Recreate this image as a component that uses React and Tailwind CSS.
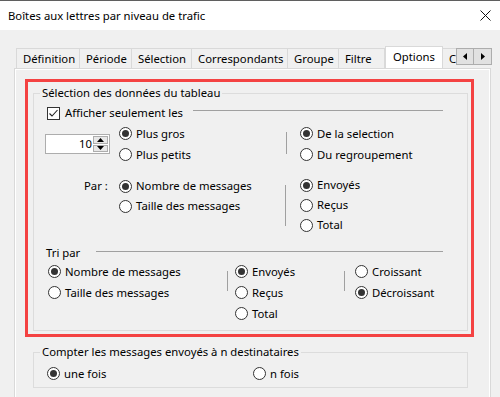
import React from "react";

const Radio = ({ checked = false, label, h = "h-[21px]" }) => (
  <div className={`flex ${h} items-center`}>
    <span className="flex h-[13px] w-[13px] shrink-0 items-center justify-center rounded-full border border-[#333333] bg-white">
      {checked && <span className="h-[7px] w-[7px] rounded-full bg-[#333333]" />}
    </span>
    <span className="ml-[4px] whitespace-nowrap">{label}</span>
  </div>
);

const Checkbox = ({ label }) => (
  <div className="flex h-[16px] items-center">
    <span className="flex h-[13px] w-[13px] shrink-0 items-center justify-center border border-[#333333] bg-white">
      <svg width="11" height="11" viewBox="0 0 11 11">
        <path d="M1.5 5.5 L4 8 L9.5 2" fill="none" stroke="#222" strokeWidth="1.1" />
      </svg>
    </span>
    <span className="ml-[5px] whitespace-nowrap">{label}</span>
  </div>
);

const VLine = ({ className = "" }) => (
  <div className={`w-px bg-[#a0a0a0] ${className}`} />
);

const GroupBox = ({ title, className = "", children }) => (
  <div className={`border border-[#dcdcdc] ${className}`}>
    <div className="-mt-[9px] ml-[6px] flex h-[16px] items-center">
      <span className="bg-[#f0f0f0] px-[2px] whitespace-nowrap">{title}</span>
    </div>
    {children}
  </div>
);

const tabs = [
  { label: "Définition", w: "w-[64px]", first: true },
  { label: "Période", w: "w-[52px]" },
  { label: "Sélection", w: "w-[60px]" },
  { label: "Correspondants", w: "w-[96px]" },
  { label: "Groupe", w: "w-[51px]" },
  { label: "Filtre", w: "w-[46px]" },
  { label: "Options", w: "w-[58px]", active: true },
  { label: "C", w: "w-[14px]" },
];

const Tabs = () => (
  <div className="ml-[2px] flex h-[23px] items-end">
    <div className="flex w-[440px] items-end overflow-hidden">
      {tabs.map((t) =>
        t.active ? (
          <div
            key={t.label}
            className={`${t.w} relative z-10 -mb-px flex h-[23px] shrink-0 items-center justify-center border-x border-t border-[#d9d9d9] bg-white pb-[2px]`}
          >
            {t.label}
          </div>
        ) : (
          <div
            key={t.label}
            className={`${t.w} flex h-[20px] shrink-0 items-center border-t border-[#d9d9d9] pl-[6px] ${
              t.first ? "border-l" : ""
            } ${t.label === "C" ? "pl-[4px]" : "border-r"}`}
          >
            {t.label}
          </div>
        )
      )}
    </div>
    <div className="mb-[3px] flex h-[17px]">
      <div className="flex w-[18px] items-center justify-center border border-[#adadad] bg-[#e1e1e1]">
        <svg width="4" height="7" viewBox="0 0 4 7">
          <path d="M4 0 L0 3.5 L4 7 Z" fill="#000" />
        </svg>
      </div>
      <div className="-ml-px flex w-[19px] items-center justify-center border border-[#adadad] bg-[#e1e1e1]">
        <svg width="4" height="7" viewBox="0 0 4 7">
          <path d="M0 0 L4 3.5 L0 7 Z" fill="#000" />
        </svg>
      </div>
    </div>
  </div>
);

const SpinBox = () => (
  <div className="flex h-[20px] w-[65px] border border-[#adadad] bg-white">
    <div className="flex flex-1 items-center justify-end pr-[1px]">10</div>
    <div className="flex w-[16px] flex-col gap-px py-[1px] pr-[1px]">
      <div className="flex flex-1 items-center justify-center border border-[#adadad] bg-[#e8e8e8]">
        <svg width="7" height="4" viewBox="0 0 7 4">
          <path d="M0 4 L3.5 0 L7 4 Z" fill="#000" />
        </svg>
      </div>
      <div className="flex flex-1 items-center justify-center border border-[#adadad] bg-[#e8e8e8]">
        <svg width="7" height="4" viewBox="0 0 7 4">
          <path d="M0 0 L3.5 4 L7 0 Z" fill="#000" />
        </svg>
      </div>
    </div>
  </div>
);

export default function App() {
  return (
    <div className="h-[397px] w-[500px] overflow-hidden border-t border-[#5f5f5f] bg-[#f0f0f0] text-[11.3px] leading-[16px] text-black font-['Segoe_UI','Noto_Sans',sans-serif]">
      {/* Title bar */}
      <div className="flex h-[29px] items-center justify-between bg-white pl-[8px] pr-[9px]">
        <span className="pt-[1px]">Boîtes aux lettres par niveau de trafic</span>
        <svg width="11" height="11" viewBox="0 0 11 11">
          <path d="M0.5 0.5 L10.5 10.5 M10.5 0.5 L0.5 10.5" stroke="#111" strokeWidth="1" />
        </svg>
      </div>

      <div className="pl-[14px] pt-[15px]">
        <Tabs />

        {/* Tab page */}
        <div className="h-[340px] w-[477px] border border-[#d9d9d9] bg-white p-px">
          <div className="h-full w-full bg-[#f0f0f0] pl-[9px] pt-[9px]">
            {/* Highlighted area */}
            <div className="h-[258px] w-[449px] border-[3px] border-[#f44242] pl-[5px] pt-[11px]">
              <GroupBox title="Sélection des données du tableau" className="h-[238px] w-[435px]">
                {/* Afficher seulement les */}
                <div className="mt-[4px] flex items-start">
                  <div className="ml-[13px] w-[146px]">
                    <Checkbox label="Afficher seulement les" />
                  </div>
                  <div className="mt-[5px] h-px w-[250px] bg-[#a0a0a0]" />
                </div>

                {/* Spin + taille */}
                <div className="mt-[2px] flex">
                  <div className="w-[85px] pl-[11px] pt-[11px]">
                    <SpinBox />
                  </div>
                  <div className="w-[167px]">
                    <Radio checked label="Plus gros" />
                    <Radio label="Plus petits" />
                  </div>
                  <VLine className="mt-[9px] h-[22px]" />
                  <div className="ml-[13px]">
                    <Radio checked label="De la selection" />
                    <Radio label="Du regroupement" />
                  </div>
                </div>

                {/* Par */}
                <div className="mt-[10px] flex">
                  <div className="w-[85px] pl-[50px] pt-[3px]">Par :</div>
                  <div className="w-[166px] pt-px">
                    <Radio checked label="Nombre de messages" h="h-[20px]" />
                    <Radio label="Taille des messages" h="h-[20px]" />
                  </div>
                  <VLine className="mt-[10px] h-[41px]" />
                  <div className="ml-[14px]">
                    <Radio checked label="Envoyés" h="h-[20px]" />
                    <Radio label="Reçus" h="h-[20px]" />
                    <Radio label="Total" h="h-[20px]" />
                  </div>
                </div>

                {/* Tri par */}
                <div className="mt-[10px] flex items-start">
                  <div className="ml-[12px] w-[50px]">Tri par</div>
                  <div className="mt-[6px] h-px w-[347px] bg-[#a0a0a0]" />
                </div>

                <div className="flex">
                  <div className="ml-[14px] w-[179px]">
                    <Radio checked label="Nombre de messages" />
                    <Radio label="Taille des messages" />
                  </div>
                  <VLine className="mt-[10px] h-[20px]" />
                  <div className="ml-[7px] w-[109px]">
                    <Radio checked label="Envoyés" />
                    <Radio label="Reçus" />
                    <Radio label="Total" />
                  </div>
                  <VLine className="mt-[10px] h-[20px]" />
                  <div className="ml-[10px]">
                    <Radio label="Croissant" />
                    <Radio checked label="Décroissant" />
                  </div>
                </div>
              </GroupBox>
            </div>

            {/* Compter */}
            <GroupBox
              title="Compter les messages envoyés à n destinataires"
              className="ml-[8px] mt-[15px] h-[36px] w-[435px]"
            >
              <div className="mt-[3px] flex">
                <div className="ml-[13px] w-[206px]">
                  <Radio checked label="une fois" />
                </div>
                <Radio label="n fois" />
              </div>
            </GroupBox>
          </div>
        </div>
      </div>
    </div>
  );
}
